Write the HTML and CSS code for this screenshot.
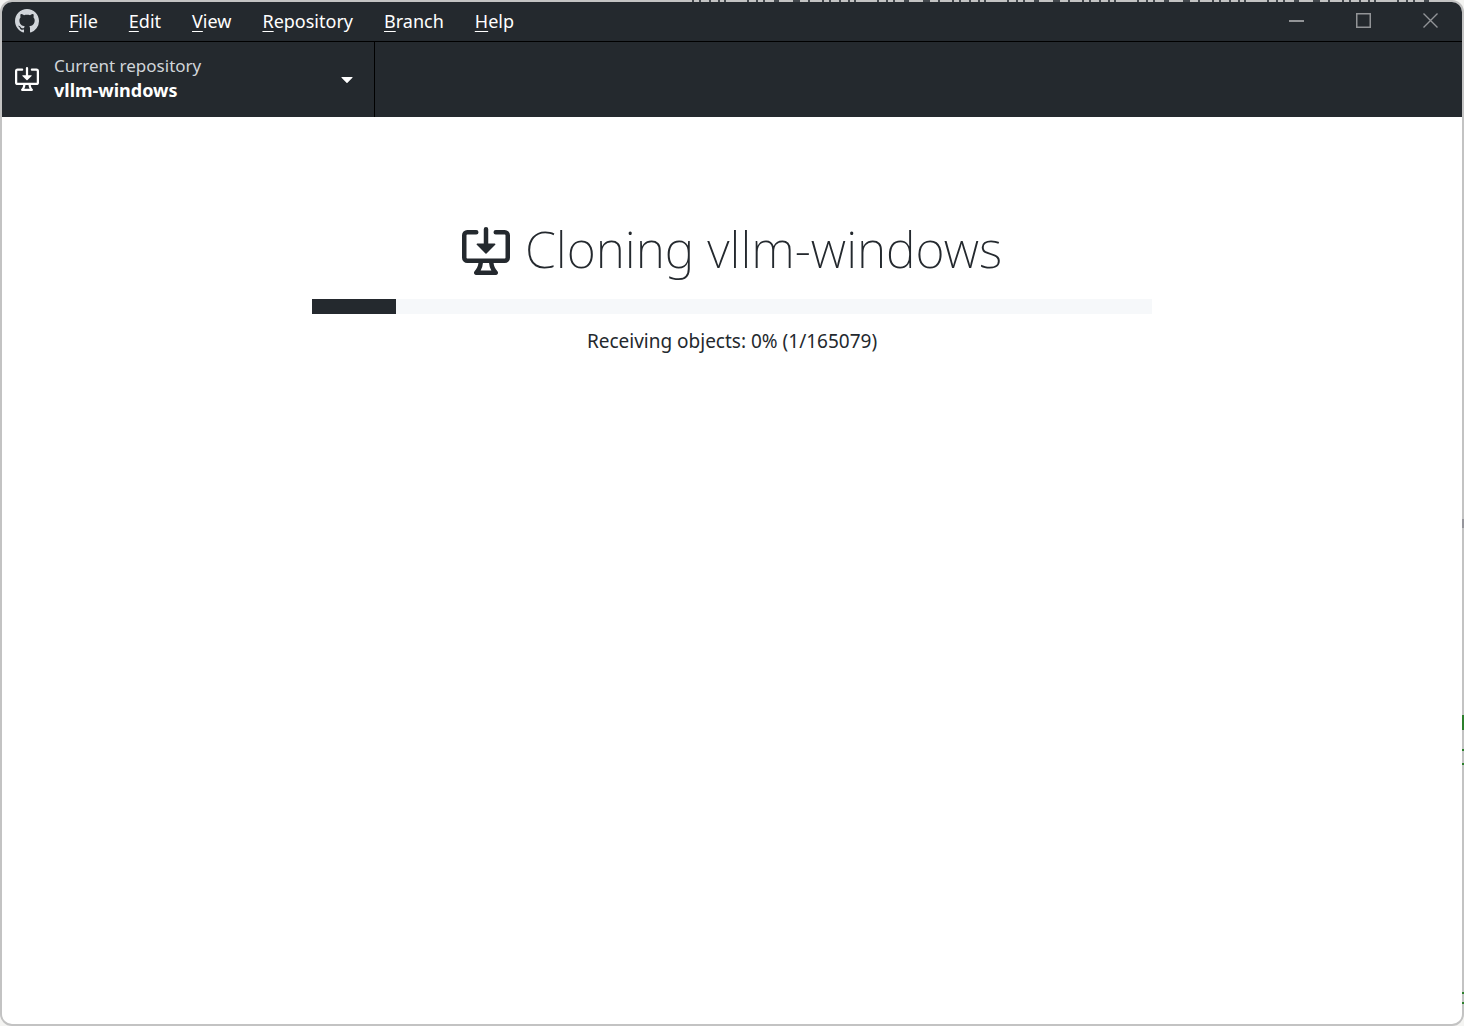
FILE: index.html
```html
<!DOCTYPE html>
<html lang="en">
<head>
<meta charset="utf-8">
<title>GitHub Desktop</title>
<link rel="stylesheet" href="styles.css">
</head>
<body>
<div class="window">
  <header class="titlebar">
    <svg class="logo" viewBox="0 0 16 16" aria-hidden="true"><path d="M8 0C3.58 0 0 3.58 0 8c0 3.54 2.29 6.53 5.47 7.59.4.07.55-.17.55-.38 0-.19-.01-.82-.01-1.49-2.01.37-2.53-.49-2.69-.94-.09-.23-.48-.94-.82-1.13-.28-.15-.68-.52-.01-.53.63-.01 1.08.58 1.23.82.72 1.21 1.87.87 2.33.66.07-.52.28-.87.51-1.07-1.78-.2-3.64-.89-3.64-3.95 0-.87.31-1.59.82-2.15-.08-.2-.36-1.02.08-2.12 0 0 .67-.21 2.2.82.64-.18 1.32-.27 2-.27s1.36.09 2 .27c1.53-1.04 2.2-.82 2.2-.82.44 1.1.16 1.92.08 2.12.51.56.82 1.27.82 2.15 0 3.07-1.87 3.75-3.65 3.95.29.25.54.73.54 1.48 0 1.07-.01 1.93-.01 2.2 0 .21.15.46.55.38A8.01 8.01 0 0 0 16 8c0-4.42-3.58-8-8-8Z"/></svg>
    <nav class="menu">
      <button><u>F</u>ile</button>
      <button><u>E</u>dit</button>
      <button><u>V</u>iew</button>
      <button><u>R</u>epository</button>
      <button><u>B</u>ranch</button>
      <button><u>H</u>elp</button>
    </nav>
    <div class="controls">
      <button aria-label="Minimize"><svg viewBox="0 0 15 15"><path d="M0 8h15" stroke-width="2"/></svg></button>
      <button aria-label="Maximize"><svg viewBox="0 0 15 15"><path d="M.75.75h13.5v13.5H.75z" stroke-width="1.5"/></svg></button>
      <button aria-label="Close"><svg viewBox="0 0 15 15"><path d="m.5.5 14 14m0-14-14 14" stroke-width="1.4"/></svg></button>
    </div>
  </header>
  <div class="toolbar">
    <button class="repository">
      <svg class="repo-icon" viewBox="0 0 16 16" aria-hidden="true"><path d="m4.927 5.927 2.896 2.896a.25.25 0 0 0 .354 0l2.896-2.896A.25.25 0 0 0 10.896 5.5H8.75V.75a.75.75 0 1 0-1.5 0V5.5H5.104a.25.25 0 0 0-.177.427Z"/><path d="M1.573 2.573a.25.25 0 0 0-.073.177v7.5a.25.25 0 0 0 .25.25h12.5a.25.25 0 0 0 .25-.25v-7.5a.25.25 0 0 0-.25-.25h-3a.75.75 0 1 1 0-1.5h3A1.75 1.75 0 0 1 16 2.75v7.5A1.75 1.75 0 0 1 14.25 12h-3.727c.099 1.041.52 1.872 1.292 2.757A.752.752 0 0 1 11.25 16h-6.5a.75.75 0 0 1-.565-1.243c.772-.885 1.192-1.716 1.292-2.757H1.75A1.75 1.75 0 0 1 0 10.25v-7.5A1.75 1.75 0 0 1 1.75 1h3a.75.75 0 0 1 0 1.5h-3a.25.25 0 0 0-.177.073ZM6.982 12a5.72 5.72 0 0 1-.765 2.5h3.566a5.72 5.72 0 0 1-.765-2.5H6.982Z"/></svg>
      <span class="repo-text">
        <span class="repo-label">Current repository</span>
        <span class="repo-name">vllm-windows</span>
      </span>
      <svg class="caret" viewBox="0 0 12 6" aria-hidden="true"><path d="M.8 0h10.4q.8.2.2.8L6.5 5.7q-.5.4-1 0L.6.8Q0 .2.8 0Z"/></svg>
    </button>
  </div>
  <main class="cloning">
    <div class="heading">
      <svg class="heading-icon" viewBox="0 0 16 16" aria-hidden="true"><path d="m4.927 5.927 2.896 2.896a.25.25 0 0 0 .354 0l2.896-2.896A.25.25 0 0 0 10.896 5.5H8.75V.75a.75.75 0 1 0-1.5 0V5.5H5.104a.25.25 0 0 0-.177.427Z"/><path d="M1.573 2.573a.25.25 0 0 0-.073.177v7.5a.25.25 0 0 0 .25.25h12.5a.25.25 0 0 0 .25-.25v-7.5a.25.25 0 0 0-.25-.25h-3a.75.75 0 1 1 0-1.5h3A1.75 1.75 0 0 1 16 2.75v7.5A1.75 1.75 0 0 1 14.25 12h-3.727c.099 1.041.52 1.872 1.292 2.757A.752.752 0 0 1 11.25 16h-6.5a.75.75 0 0 1-.565-1.243c.772-.885 1.192-1.716 1.292-2.757H1.75A1.75 1.75 0 0 1 0 10.25v-7.5A1.75 1.75 0 0 1 1.75 1h3a.75.75 0 0 1 0 1.5h-3a.25.25 0 0 0-.177.073ZM6.982 12a5.72 5.72 0 0 1-.765 2.5h3.566a5.72 5.72 0 0 1-.765-2.5H6.982Z"/></svg>
      <h1>Cloning vllm-windows</h1>
    </div>
    <progress value="10" max="100" aria-label="Clone progress"></progress>
    <p class="status">Receiving objects: 0% (1/165079)</p>
  </main>
</div>
<svg class="edge-top" viewBox="0 0 772 2" aria-hidden="true"><path d="M2 1h750" stroke-dasharray="2 5 2 8 2 7 2 4 2 21 2 7 2 5 2 9 5 14 7 8 2 12"/></svg>
<svg class="edge-right" viewBox="0 0 2 500" aria-hidden="true"><path class="grey" d="M0 0h2v9H0z"/><path d="M0 196h2v15H0zM0 230h2v2H0zM0 244h2v2H0zM0 473h2v2H0zM0 483h2v2H0z"/></svg>
</body>
</html>
```

FILE: styles.css
```css
* {
  box-sizing: border-box;
}

body {
  position: relative;
  margin: 0;
  background: #f4f4f2;
  color: #24292e;
  font: 18px/24px "Noto Sans", sans-serif;
}

button {
  padding: 0;
  border: 0;
  background: none;
  color: inherit;
  font: inherit;
}

.window {
  display: flex;
  flex-direction: column;
  min-height: 100vh;
  overflow: hidden;
  border: 2px solid #c3c3c3;
  border-radius: 12px;
  background: #fff;
}

.titlebar {
  display: flex;
  align-items: center;
  height: 40px;
  padding: 0 0 2px 13px;
  border-bottom: 1px solid #000;
  background: #24292e;
  color: #fff;
}

.logo {
  width: 24px;
  height: 24px;
  fill: #d1d5da;
}

.menu {
  display: flex;
  flex: 1;
  gap: 1px;
  margin-left: 15px;
}

.menu button {
  padding: 0 15px;
}

.menu u {
  text-underline-offset: 3px;
  text-decoration-thickness: 1px;
}

.controls {
  display: flex;
}

.controls button {
  display: grid;
  place-items: center;
  width: 67px;
  height: 37px;
  padding-left: 4px;
}

.controls svg {
  width: 15px;
  height: 15px;
  fill: none;
  stroke: #929497;
}

.toolbar {
  display: flex;
  height: 75px;
  background: #24292e;
}

.repository {
  display: flex;
  align-items: center;
  width: 373px;
  padding: 0 21px 2px 13px;
  border-right: 1px solid #000;
  color: #fff;
  text-align: left;
}

.repo-icon {
  width: 24px;
  height: 24px;
  fill: #fff;
}

.repo-text {
  display: flex;
  flex: 1;
  flex-direction: column;
  margin-left: 15px;
  padding-bottom: 2px;
}

.repo-label {
  color: #d1d5da;
  font-size: 17px;
}

.repo-name {
  font-weight: 700;
}

.caret {
  width: 12px;
  height: 6px;
  margin-top: 2px;
  fill: #fff;
}

.cloning {
  display: flex;
  flex-direction: column;
  align-items: center;
  padding: 96px 24px 24px;
}

.heading {
  display: flex;
  align-items: center;
  gap: 15px;
}

.heading-icon {
  width: 48px;
  height: 48px;
  margin-top: 4px;
  fill: #24292e;
}

h1 {
  margin: 0;
  font-size: 50px;
  font-weight: 200;
  line-height: 72px;
}

progress {
  width: 100%;
  max-width: 840px;
  height: 15px;
  margin-top: 14px;
  border: 0;
  background: #f6f8fa;
  appearance: none;
}

progress::-webkit-progress-bar {
  background: #f6f8fa;
}

progress::-webkit-progress-value {
  background: #24292e;
}

.status {
  margin: 15px 0 0;
  font-size: 19px;
}

.edge-top {
  position: absolute;
  top: 0;
  right: 2px;
  width: 772px;
  height: 2px;
  fill: none;
  stroke: #42474c;
  stroke-width: 2px;
}

.edge-right {
  position: absolute;
  top: 519px;
  right: 0;
  width: 2px;
  height: 500px;
  fill: #2c7f2c;
}

.edge-right .grey {
  fill: #96969c;
}
```
